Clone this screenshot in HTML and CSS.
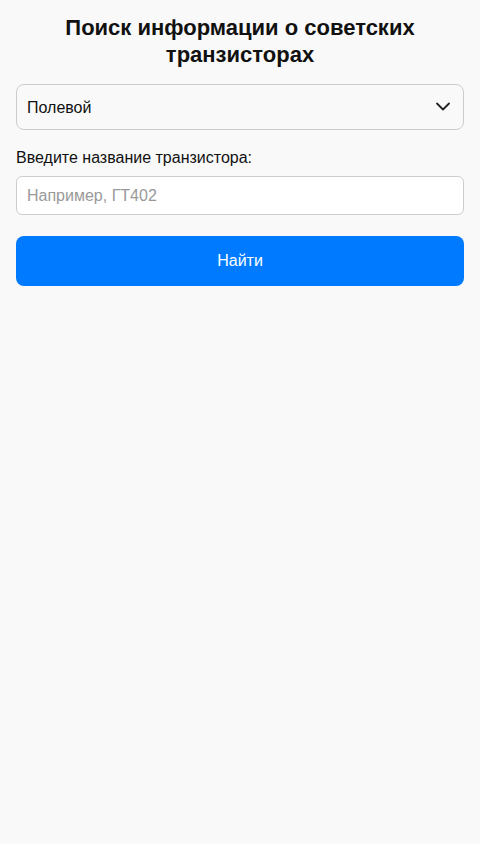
FILE: index.html
```html
<!doctype html>
<html lang="ru">
<head>
  <meta charset="UTF-8" />
  <meta name="viewport" content="width=device-width, initial-scale=1.0" />
  <title>Поиск транзисторов</title>
  <link rel="stylesheet" href="styles.css">
</head>
<body>
  <main class="app">
    <h1>Поиск информации о советских транзисторах</h1>

    <div class="select-wrap">
      <select id="typeSelect">
        <option>Полевой</option>
        <option>Биполярный</option>
      </select>
      <svg class="chevron" width="16" height="16" viewBox="0 0 16 16" aria-hidden="true">
        <path d="M2 5.5l6 6 6-6" fill="none" stroke="#222" stroke-width="1.8" stroke-linecap="round" stroke-linejoin="round"/>
      </svg>
    </div>

    <label for="nameInput">Введите название транзистора:</label>
    <input id="nameInput" placeholder="Например, ГТ402" />

    <button id="searchBtn">Найти</button>
  </main>
</body>
</html>
```

FILE: styles.css
```css
* { box-sizing: border-box; }

body {
  margin: 0;
  min-height: 100vh;
  background: #f9f9f9;
  color: #111;
  font-family: "Liberation Sans", Arial, sans-serif;
}

.app {
  padding: 14px 16px;
  display: flex;
  flex-direction: column;
}

h1 {
  margin: 0 0 16px;
  font-size: 22px;
  line-height: 27px;
  text-align: center;
}

select, input, button {
  font: inherit;
  font-size: 16px;
}

.select-wrap {
  position: relative;
}

select {
  width: 100%;
  height: 46px;
  padding: 0 40px 0 10px;
  border: 1px solid #ccc;
  border-radius: 8px;
  background: #f9f9f9;
  color: #111;
  appearance: none;
  -webkit-appearance: none;
}

.chevron {
  position: absolute;
  right: 13px;
  top: 14px;
  pointer-events: none;
}

label {
  margin: 18px 0 8px;
  font-size: 16px;
  line-height: 20px;
}

input {
  height: 39px;
  padding: 0 10px;
  border: 1px solid #ccc;
  border-radius: 6px;
  background: #fff;
  outline: none;
}

input::placeholder { color: #999; }

button {
  margin-top: 21px;
  height: 50px;
  border: 0;
  border-radius: 8px;
  background: #007bff;
  color: #fff;
  cursor: pointer;
}
```
